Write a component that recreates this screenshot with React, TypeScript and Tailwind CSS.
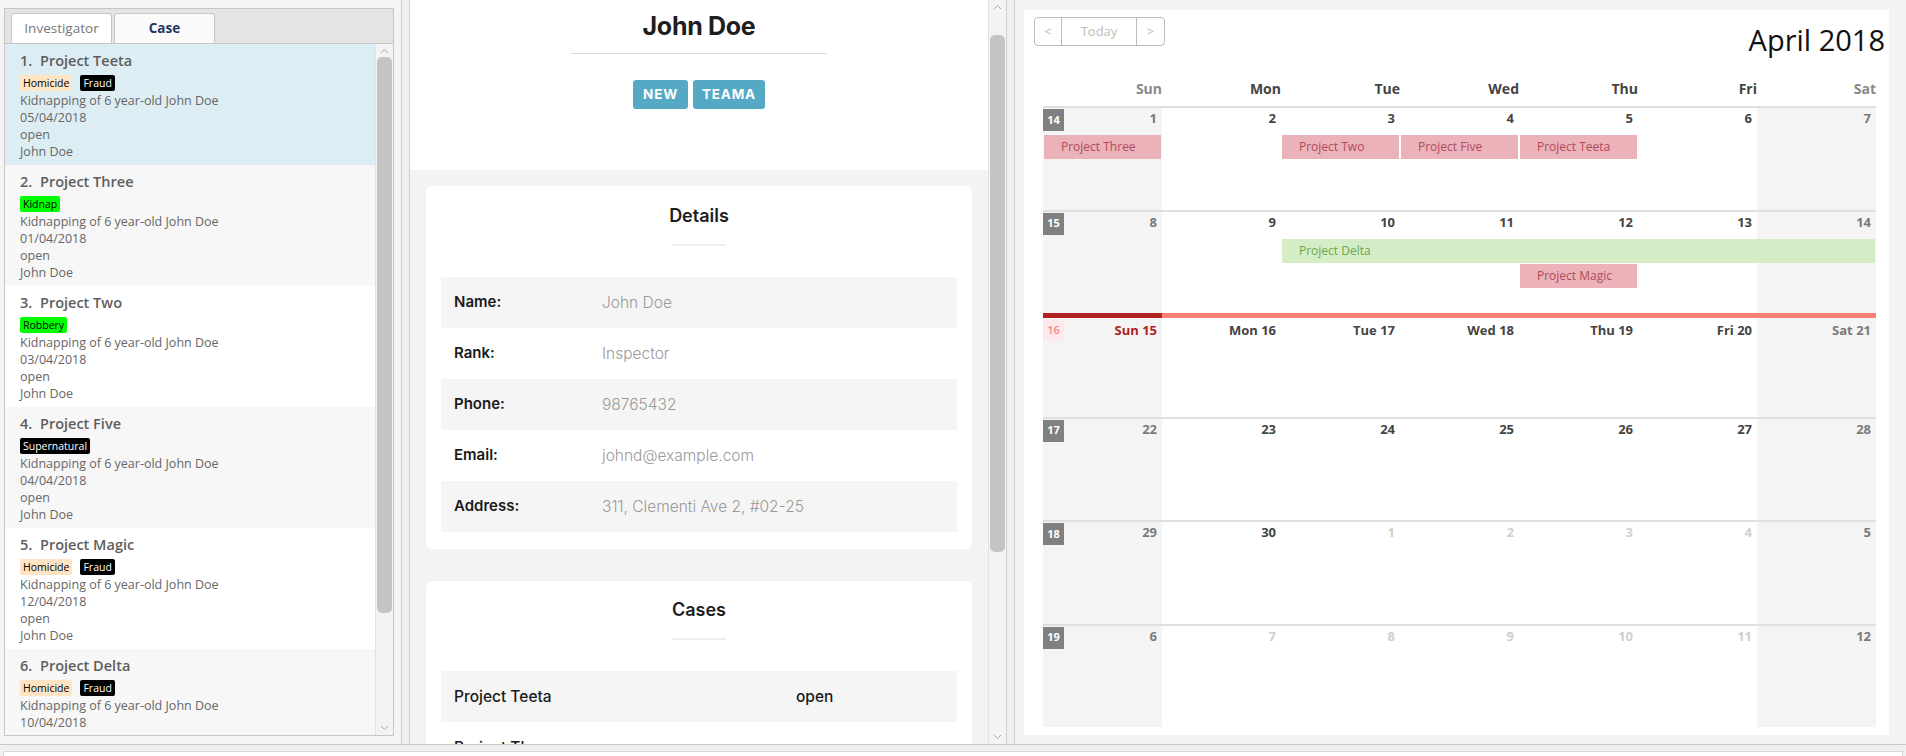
import React from "react";

const seg = { fontFamily: '"Open Sans", "Noto Sans", sans-serif' };
const pop = { fontFamily: 'Inter, "Noto Sans", sans-serif' };

const cases = [
  { n: 1, name: "Project Teeta", tags: ["Homicide", "Fraud"], date: "05/04/2018" },
  { n: 2, name: "Project Three", tags: ["Kidnap"], date: "01/04/2018" },
  { n: 3, name: "Project Two", tags: ["Robbery"], date: "03/04/2018" },
  { n: 4, name: "Project Five", tags: ["Supernatural"], date: "04/04/2018" },
  { n: 5, name: "Project Magic", tags: ["Homicide", "Fraud"], date: "12/04/2018" },
  { n: 6, name: "Project Delta", tags: ["Homicide", "Fraud"], date: "10/04/2018" },
];

const tagColors: Record<string, string> = {
  Homicide: "bg-[#ffe4c4] text-black",
  Fraud: "bg-black text-white",
  Kidnap: "bg-[#00ff00] text-black",
  Robbery: "bg-[#00ff00] text-black",
  Supernatural: "bg-black text-white",
};

const rowBg = ["bg-[#ddedf4]", "bg-[#f7f7f7]", "bg-white", "bg-[#f7f7f7]", "bg-white", "bg-[#f7f7f7]"];

const colStart = ["", "col-start-1", "col-start-2", "col-start-3", "col-start-4", "col-start-5", "col-start-6", "col-start-7"];
const colSpan = ["", "col-span-1", "col-span-2", "col-span-3", "col-span-4", "col-span-5", "col-span-6", "col-span-7"];
const rowStart = ["", "row-start-1", "row-start-2", "row-start-3"];

type Ev = { label: string; start: number; span: number; row: number; green?: boolean };
type Week = { wk: number; days: string[]; muted?: number[]; current?: boolean; events: Ev[] };

const weeks: Week[] = [
  {
    wk: 14,
    days: ["1", "2", "3", "4", "5", "6", "7"],
    events: [
      { label: "Project Three", start: 1, span: 1, row: 2 },
      { label: "Project Two", start: 3, span: 1, row: 2 },
      { label: "Project Five", start: 4, span: 1, row: 2 },
      { label: "Project Teeta", start: 5, span: 1, row: 2 },
    ],
  },
  {
    wk: 15,
    days: ["8", "9", "10", "11", "12", "13", "14"],
    events: [
      { label: "Project Delta", start: 3, span: 5, row: 2, green: true },
      { label: "Project Magic", start: 5, span: 1, row: 3 },
    ],
  },
  {
    wk: 16,
    days: ["Sun 15", "Mon 16", "Tue 17", "Wed 18", "Thu 19", "Fri 20", "Sat 21"],
    current: true,
    events: [],
  },
  { wk: 17, days: ["22", "23", "24", "25", "26", "27", "28"], events: [] },
  { wk: 18, days: ["29", "30", "1", "2", "3", "4", "5"], muted: [2, 3, 4, 5], events: [] },
  { wk: 19, days: ["6", "7", "8", "9", "10", "11", "12"], muted: [1, 2, 3, 4, 5], events: [] },
];

const Chevron = ({ down }: { down?: boolean }) => (
  <svg width="9" height="6" viewBox="0 0 9 6" className="shrink-0">
    <path d={down ? "M1 1l3.5 3.5L8 1" : "M1 5l3.5-3.5L8 5"} fill="none" stroke="#a8a8a8" strokeWidth="1" />
  </svg>
);

function CaseList() {
  return (
    <div className="w-[401px] h-full bg-[#f4f4f4] pl-[4px] pr-[7px] pt-[8px] pb-[8px]" style={seg}>
      <div className="h-full border border-[#c6c6c6] flex flex-col bg-white">
        <div className="h-[35px] bg-[#e4e4e4] flex items-end pl-[6px] gap-[2px] border-b border-[#c6c6c6]">
          <div className="h-[30px] w-[101px] border border-b-0 border-[#c6c6c6] rounded-t-[3px] bg-white flex items-center justify-center text-[13.5px] text-[#777]">
            Investigator
          </div>
          <div className="h-[30px] w-[101px] border border-b-0 border-[#c6c6c6] rounded-t-[3px] bg-[#fafafa] flex items-center justify-center text-[13.5px] font-bold text-[#1f3864]">
            Case
          </div>
        </div>
        <div className="flex flex-1 min-h-0">
          <div className="flex-1 overflow-hidden">
            {cases.map((c, i) => (
              <div key={c.n} className={`${rowBg[i]} h-[121px] pl-[15px] pt-[7px] text-[#666]`}>
                <div className="h-[20px] flex items-center text-[14.5px] font-semibold text-[#5e5e5e]">
                  <span className="w-[20px]">{c.n}.</span>
                  <span>{c.name}</span>
                </div>
                <div className="flex gap-[8px] mt-[4px] h-[16px]">
                  {c.tags.map((t) => (
                    <span key={t} className={`${tagColors[t]} px-[3px] rounded-[2px] text-[10.5px] leading-[16px]`}>
                      {t}
                    </span>
                  ))}
                </div>
                <div className="mt-px text-[12.5px] leading-[17px]">
                  <div>Kidnapping of 6 year-old John Doe</div>
                  <div>{c.date}</div>
                  <div>open</div>
                  <div>John Doe</div>
                </div>
              </div>
            ))}
          </div>
          <div className="w-[18px] bg-[#f3f3f3] border-l border-[#e2e2e2] flex flex-col items-center py-[4px]">
            <Chevron />
            <div className="w-[15px] h-[556px] mt-[3px] rounded-[5px] bg-[#c4c4c4]" />
            <div className="flex-1" />
            <Chevron down />
          </div>
        </div>
      </div>
    </div>
  );
}

function Divider() {
  return <div className="w-[9px] h-full bg-[#f0f0f0] border-l border-r border-[#cfcfcf]" />;
}

const details = [
  ["Name:", "John Doe"],
  ["Rank:", "Inspector"],
  ["Phone:", "98765432"],
  ["Email:", "johnd@example.com"],
  ["Address:", "311, Clementi Ave 2, #02-25"],
];

function Profile() {
  return (
    <div className="w-[596px] h-full flex" style={pop}>
      <div className="flex-1 bg-[#f3f3f3] overflow-hidden">
        <div className="h-[170px] bg-white flex flex-col items-center pt-[8px]">
          <div className="text-[25px] leading-[36px] font-bold text-[#1e1e1e] tracking-[-0.3px]">John Doe</div>
          <div className="w-[256px] h-px bg-[#dcdcdc] mt-[9px]" />
          <div className="flex gap-[5px] mt-[26px]">
            <span className="h-[29px] w-[55px] rounded-[3px] bg-[#56a9c5] text-white text-[13.5px] font-bold tracking-[0.8px] flex items-center justify-center">NEW</span>
            <span className="h-[29px] w-[72px] rounded-[3px] bg-[#56a9c5] text-white text-[13.5px] font-bold tracking-[0.8px] flex items-center justify-center">TEAMA</span>
          </div>
        </div>
        <div className="mx-[16px] mt-[16px] rounded-[6px] bg-white px-[15px] pt-[18px] pb-[17px]">
          <div className="text-center text-[18px] leading-[24px] font-semibold text-[#1e1e1e]">Details</div>
          <div className="w-[54px] h-[2px] bg-[#eeeeee] mx-auto mt-[16px]" />
          <div className="mt-[31px]">
            {details.map(([k, v], i) => (
              <div key={k} className={`h-[51px] flex items-center pl-[13px] ${i % 2 === 0 ? "bg-[#f5f5f5]" : "bg-white"}`}>
                <span className="w-[148px] text-[15px] font-semibold text-[#1a1a1a]">{k}</span>
                <span className="text-[15.5px] font-light text-[#9a9a9a]">{v}</span>
              </div>
            ))}
          </div>
        </div>
        <div className="mx-[16px] mt-[32px] rounded-[6px] bg-white px-[15px] pt-[17px] pb-[17px]">
          <div className="text-center text-[18px] leading-[24px] font-semibold text-[#1e1e1e]">Cases</div>
          <div className="w-[54px] h-[2px] bg-[#eeeeee] mx-auto mt-[16px]" />
          <div className="mt-[31px]">
            {["Project Teeta", "Project Three", "Project Two"].map((p, i) => (
              <div key={p} className={`h-[51px] flex items-center pl-[13px] ${i % 2 === 0 ? "bg-[#f5f5f5]" : "bg-white"}`}>
                <span className="w-[342px] text-[15.5px] font-medium text-[#1a1a1a]">{p}</span>
                <span className="text-[15.5px] font-medium text-[#1a1a1a]">open</span>
              </div>
            ))}
          </div>
        </div>
      </div>
      <div className="w-[18px] bg-[#f3f3f3] border-l border-[#e2e2e2] flex flex-col items-center pt-[4px] pb-[4px]">
        <Chevron />
        <div className="w-[15px] h-[517px] mt-[25px] rounded-[5px] bg-[#c4c4c4]" />
        <div className="flex-1" />
        <Chevron down />
      </div>
    </div>
  );
}

const headers = ["Sun", "Mon", "Tue", "Wed", "Thu", "Fri", "Sat"];

function WeekRow({ w }: { w: Week }) {
  return (
    <div className="grid grid-cols-7 grid-rows-[29px_25px_25px_1fr] h-[103.5px]">
      {w.days.map((d, i) => {
        const weekend = i === 0 || i === 6;
        const muted = w.muted?.includes(i) && !weekend;
        let border = "border-t-2 border-[#e0e0e0]";
        if (w.current) border = i === 0 ? "border-t-[5px] border-[#b22222]" : "border-t-[5px] border-[#fa8072]";
        let color = "text-[#444]";
        if (weekend) color = "text-[#7a7a7a]";
        if (muted) color = "text-[#cfcfcf]";
        if (w.current && i === 0) color = "text-[#b22222]";
        return (
          <div
            key={i}
            className={`${colStart[i + 1]} row-start-1 row-span-4 ${border} ${weekend ? "bg-[#f4f4f4]" : "bg-white"} flex items-start justify-between pr-[5px] pt-px`}
          >
            {i === 0 ? (
              w.current ? (
                <span className="w-[21px] h-[22px] bg-[#fde9ec] text-[#ec8a8a] text-[11px] font-semibold flex items-center justify-center">
                  {w.wk}
                </span>
              ) : (
                <span className="w-[21px] h-[22px] bg-[#808080] text-white text-[11px] font-bold flex items-center justify-center">
                  {w.wk}
                </span>
              )
            ) : (
              <span />
            )}
            <span className={`text-[13px] leading-[18px] font-bold ${color} ${w.current ? "mt-[2px]" : ""}`}>{d}</span>
          </div>
        );
      })}
      {w.events.map((e) => (
        <div
          key={e.label}
          className={`${colStart[e.start]} ${colSpan[e.span]} ${rowStart[e.row]} mx-px mb-px ${
            e.green ? "bg-[#d5edc6] text-[#6aa84f]" : "bg-[#ebb2b9] text-[#b04a5c]"
          } flex items-center pl-[17px] text-[12px]`}
        >
          {e.label}
        </div>
      ))}
    </div>
  );
}

function Calendar() {
  return (
    <div className="flex-1 h-full bg-[#f3f3f3] pl-[9px] pr-[17px] pt-[10px] pb-[9px]" style={seg}>
      <div className="h-full bg-white flex flex-col pl-[10px] pr-[4px] pt-[7px]">
        <div className="h-[57px] flex items-start justify-between">
          <div className="flex h-[29px] border border-[#bcbcbc] rounded-[4px] text-[#bdbdbd] text-[13px]">
            <span className="w-[27px] flex items-center justify-center border-r border-[#bcbcbc]">&lt;</span>
            <span className="w-[75px] flex items-center justify-center border-r border-[#bcbcbc]">Today</span>
            <span className="w-[27px] flex items-center justify-center">&gt;</span>
          </div>
          <div className="text-[29px] leading-[36px] text-[#111] mt-[5px]">April 2018</div>
        </div>
        <div className="ml-[9px] mr-[9px]">
          <div className="grid grid-cols-7 h-[32px] items-end pb-[7px]">
            {headers.map((h, i) => (
              <div
                key={h}
                className={`text-right text-[14px] leading-[20px] font-bold ${i === 0 || i === 6 ? "text-[#888]" : "text-[#444]"}`}
              >
                {h}
              </div>
            ))}
          </div>
          {weeks.map((w) => (
            <WeekRow key={w.wk} w={w} />
          ))}
        </div>
      </div>
    </div>
  );
}

export default function App() {
  return (
    <div className="w-[1906px] h-[756px] bg-[#f4f4f4] flex flex-col overflow-hidden">
      <div className="flex h-[744px]">
        <CaseList />
        <Divider />
        <Profile />
        <Divider />
        <Calendar />
      </div>
      <div className="flex-1 border-t border-[#c8c8c8] bg-[#f0f0f0] px-[3px] pt-[6px]">
        <div className="h-full bg-white border border-b-0 border-[#d8d8d8]" />
      </div>
    </div>
  );
}
